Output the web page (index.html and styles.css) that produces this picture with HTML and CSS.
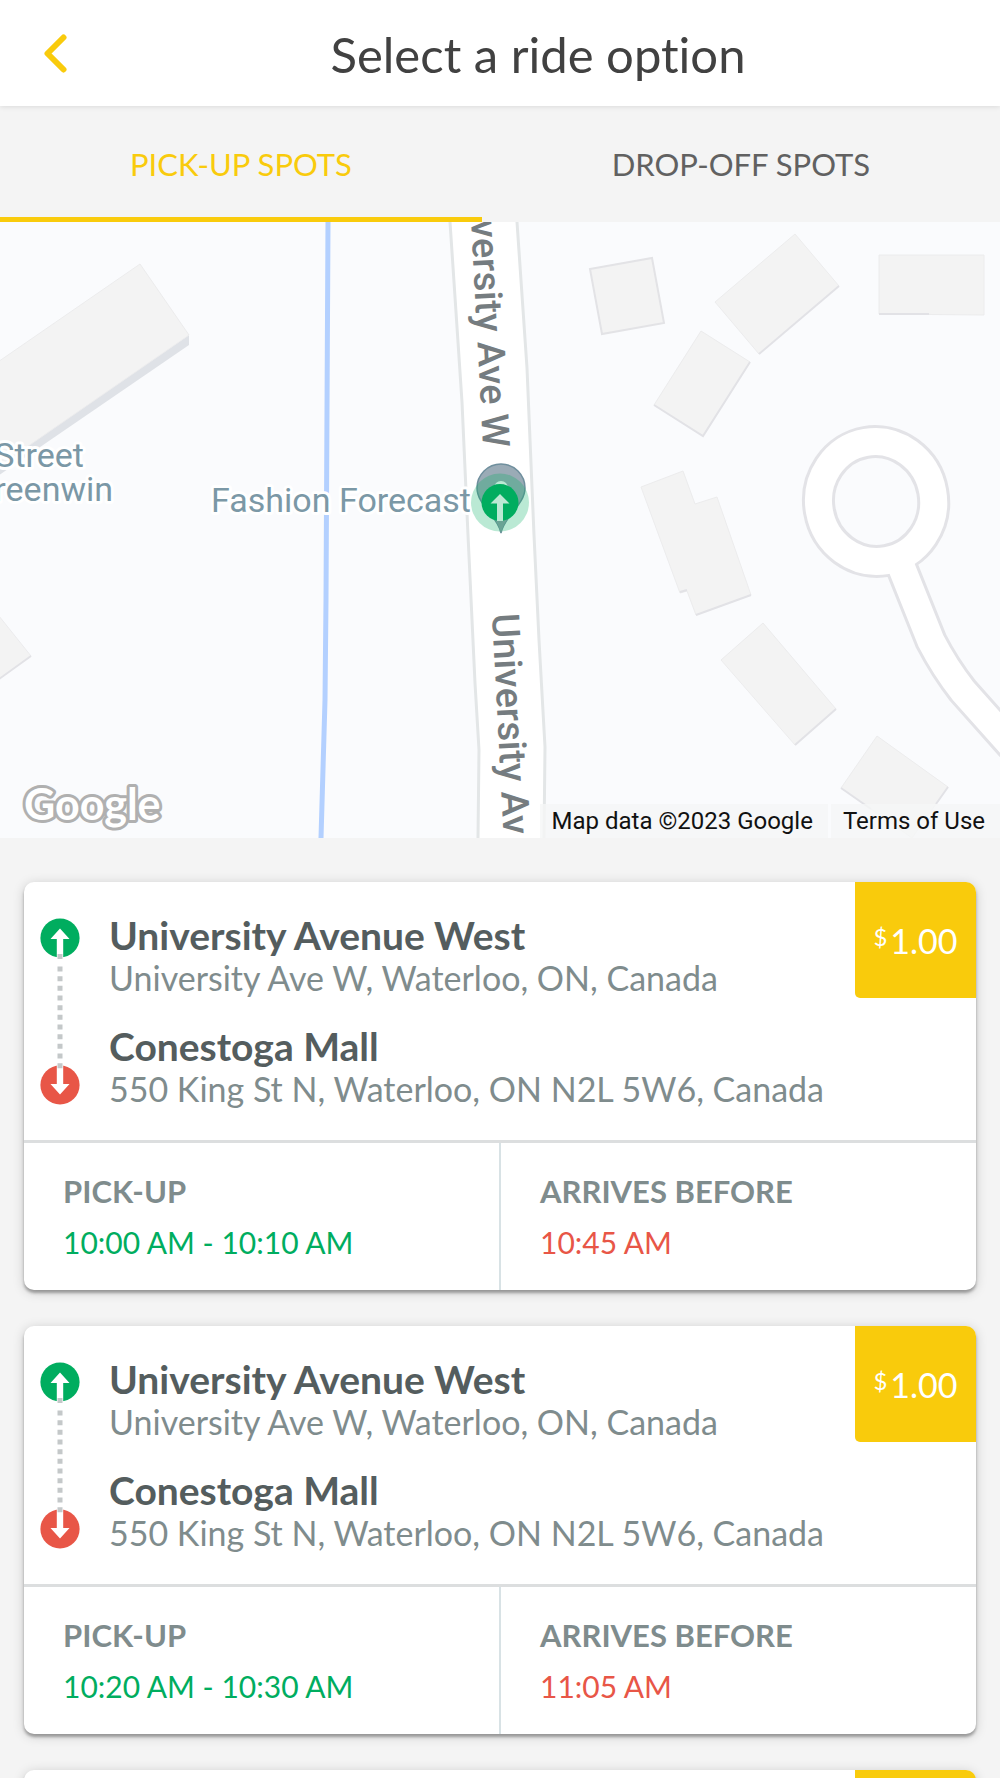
FILE: index.html
```
<!DOCTYPE html>
<html lang="en">
<head>
    <meta charset="UTF-8">
    <meta name="viewport" content="width=device-width, initial-scale=1.0">
    <title>Select a ride option</title>
    <link rel="stylesheet" href="styles.css">
</head>
<body>
    <!-- Shared icons -->
    <svg class="sprite" aria-hidden="true">
        <symbol id="route" viewBox="0 0 40 188">
            <circle cx="20" cy="20" r="19.6" fill="#00ad5f"/>
            <path d="M20 10.500l9.500 10.500h-6.300v20h-6.400v-20h-6.300z" fill="#fff"/>
            <circle cx="20" cy="167" r="19.6" fill="#e85647"/>
            <path d="M20 176.500l9.500-10.500h-6.300v-20h-6.400v20h-6.300z" fill="#fff"/>
            <path d="M20 36v5" stroke="#c4c8c9" stroke-width="5"/>
            <path d="M20 48.500v104" stroke="#c4c8c9" stroke-width="5" stroke-dasharray="5 4.670"/>
        </symbol>
    </svg>

    <div class="app">
        <header class="header">
            <button class="back" type="button" aria-label="Back">
                <svg viewBox="0 0 24 40" width="24" height="40"><path d="M19.500 4.500L3.500 20.500l16 16" fill="none" stroke="#f9cb0c" stroke-width="6" stroke-linecap="round" stroke-linejoin="round"/></svg>
            </button>
            <h1>Select a ride option</h1>
        </header>

        <div class="tabs" role="tablist">
            <button class="tab active" type="button" role="tab" aria-selected="true">PICK-UP SPOTS</button>
            <button class="tab" type="button" role="tab" aria-selected="false">DROP-OFF SPOTS</button>
        </div>

        <div class="map">
            <svg class="map-canvas" viewBox="0 222 1000 616" preserveAspectRatio="xMidYMid slice">
                <!-- buildings -->
                <path d="M189 335v10L-5 478v-10z" fill="#dfe2e7"/>
                <g fill="#f3f3f3" stroke="#ececed" stroke-width="1">
                    <path d="M-5 364L140 264l49 71L-5 469z"/>
                    <path d="M-5 611L31 656l-36 26z"/>
                    <path d="M795 234l44 52-80 68-44-52z"/>
                    <path d="M879 255h105v60l-105-1z"/>
                    <path d="M701 331l49 31-47 74-49-31z"/>
                    <path d="M641 487l42-16 12 33 22-7 34 98-55 20-9-24-7 2z"/>
                    <path d="M763 623l73 86-41 36-74-85z"/>
                    <path d="M877 736l71 51-36 51-71-50z"/>
                </g>
                <path d="M590 269l62-11 12 65-62 11z" fill="#f3f3f3" stroke="#e3e3e6" stroke-width="2"/>
                <g fill="none" stroke="#e2e2e6" stroke-width="2">
                    <path d="M839 286l-80 68M750 362l-47 74-49-31M879 314h50M751 595l-55 20M680 592l7-2M836 709l-41 36M31 656l-36 26M948 787l-12 17M841 788l30 21"/>
                </g>

                <!-- creek -->
                <path d="M328 222L326 600 325 700 321 838" fill="none" stroke="#b3d0ff" stroke-width="5"/>

                <!-- streets -->
                <path d="M450 222L462 402 468 535 475 683 479 750 478 838H544L545 747 539 640 534 535 527 368 517 222z" fill="#fff"/>
                <path d="M450 222L462 402 468 535 475 683 479 750 478 838M544 838L545 747 539 640 534 535 527 368 517 222" fill="none" stroke="#e3e6e7" stroke-width="3"/>
                <g fill="none" stroke="#e3e3e7" stroke-width="33">
                    <ellipse cx="876" cy="501.500" rx="57.500" ry="60" transform="rotate(-10 876 501)"/>
                    <path d="M899 561L931 641Q945 668 963 691L1012 746"/>
                </g>
                <g fill="none" stroke="#fff" stroke-width="27">
                    <ellipse cx="876" cy="501.500" rx="57.500" ry="60" transform="rotate(-10 876 501)"/>
                    <path d="M899 561L931 641Q945 668 963 691L1012 746"/>
                </g>

                <!-- labels -->
                <text class="street" transform="translate(483 448) rotate(87)" text-anchor="end">University Ave W</text>
                <text class="street" transform="translate(492 614) rotate(87)">University Av</text>
                <text class="place" x="84" y="467" text-anchor="end">Street</text>
                <text class="place" x="113" y="501" text-anchor="end">Greenwin</text>
                <text class="place" x="471" y="512" text-anchor="end">Fashion Forecast</text>
                <text class="brand" x="24" y="820">Google</text>

                <!-- pick-up marker -->
                <path d="M501 533C498 516 477 505 477 488a24 24 0 0 1 48 0c0 17-21 28-24 45z" fill="#9aabb6" stroke="#6f8f9d" stroke-width="1.500"/>
                <circle cx="501" cy="488" r="7" fill="#fff"/>
                <circle cx="500" cy="502.500" r="29" fill="#00ad5f" fill-opacity=".27"/>
                <path d="M493 517h16q-6 8-8 16-2-8-8-16z" fill="#6ba395"/>
                <circle cx="500" cy="502.500" r="18.500" fill="#00ad5f"/>
                <path d="M500 494l9.500 9.500H503V521h-6v-17.500h-6.500z" fill="#bbe9d3"/>
            </svg>
            <div class="map-credits">
                <span>Map data ©2023 Google</span>
                <a href="#terms">Terms of Use</a>
            </div>
        </div>

        <main class="rides">
            <article class="ride">
                <div class="ride-top">
                    <svg class="route"><use href="#route"/></svg>
                    <div class="places">
                        <h2>University Avenue West</h2>
                        <p>University Ave W, Waterloo, ON, Canada</p>
                        <h2>Conestoga Mall</h2>
                        <p>550 King St N, Waterloo, ON N2L 5W6, Canada</p>
                    </div>
                    <div class="price"><span class="currency">$</span>1.00</div>
                </div>
                <dl class="times">
                    <div class="time pickup">
                        <dt>PICK-UP</dt>
                        <dd>10:00 AM - 10:10 AM</dd>
                    </div>
                    <div class="time arrival">
                        <dt>ARRIVES BEFORE</dt>
                        <dd>10:45 AM</dd>
                    </div>
                </dl>
            </article>

            <article class="ride">
                <div class="ride-top">
                    <svg class="route"><use href="#route"/></svg>
                    <div class="places">
                        <h2>University Avenue West</h2>
                        <p>University Ave W, Waterloo, ON, Canada</p>
                        <h2>Conestoga Mall</h2>
                        <p>550 King St N, Waterloo, ON N2L 5W6, Canada</p>
                    </div>
                    <div class="price"><span class="currency">$</span>1.00</div>
                </div>
                <dl class="times">
                    <div class="time pickup">
                        <dt>PICK-UP</dt>
                        <dd>10:20 AM - 10:30 AM</dd>
                    </div>
                    <div class="time arrival">
                        <dt>ARRIVES BEFORE</dt>
                        <dd>11:05 AM</dd>
                    </div>
                </dl>
            </article>

            <article class="ride">
                <div class="ride-top">
                    <div class="places"></div>
                    <div class="price"></div>
                </div>
            </article>
        </main>
    </div>
</body>
</html>
```
FILE: styles.css
```
* {
    margin: 0;
    padding: 0;
    box-sizing: border-box;
}

body {
    font-family: Lato, sans-serif;
    font-variant-ligatures: none;
    background: #f4f4f4;
    color: #414141;
}

button {
    font: inherit;
    background: none;
    border: none;
    cursor: pointer;
}

.sprite {
    display: none;
}

.app {
    display: flex;
    flex-direction: column;
    height: 100vh;
    overflow: hidden;
}

/* Header */
.header {
    display: flex;
    align-items: center;
    flex-shrink: 0;
    height: 106px;
    background: #fff;
    box-shadow: 0 1px 5px rgba(0, 0, 0, 0.1);
}

.back {
    display: flex;
    width: 76px;
    padding-left: 44px;
}

.header h1 {
    flex: 1;
    padding-top: 2px;
    font-size: 49px;
    font-weight: 400;
    line-height: 64px;
    text-align: center;
}

/* Tabs */
.tabs {
    display: flex;
    flex-shrink: 0;
    height: 116px;
}

.tab {
    flex: 1 1 auto;
    font-size: 31px;
    color: #616161;
    border-top: 5px solid transparent;
    border-bottom: 5px solid transparent;
}

.tab.active {
    color: #f9cb0c;
    border-bottom-color: #f9cb0c;
}

/* Map */
.map {
    position: relative;
    flex-shrink: 0;
    aspect-ratio: 1000 / 616;
    background: #fafbfd;
    overflow: hidden;
}

.map-canvas {
    display: block;
    width: 100%;
    height: 100%;
}

.map text {
    font-family: Roboto, sans-serif;
    paint-order: stroke;
    stroke-linejoin: round;
}

.map .street {
    font-size: 38px;
    font-weight: 500;
    fill: #757c80;
}

.map .place {
    font-size: 34px;
    fill: #7b98a6;
    stroke: #fff;
    stroke-width: 6px;
}

.map .brand {
    font-family: Lato, sans-serif;
    font-size: 43px;
    font-weight: 700;
    fill: #fff;
    stroke: #b0b0b0;
    stroke-width: 6px;
}

.map-credits {
    position: absolute;
    right: 0;
    bottom: 0;
    display: flex;
    gap: 3px;
    font-family: Roboto, sans-serif;
    font-size: 24px;
    line-height: 34px;
    color: #111;
}

.map-credits > * {
    padding: 0 15px 0 12px;
    color: inherit;
    text-decoration: none;
    background: rgba(245, 246, 246, 0.8);
}

/* Ride cards */
.rides {
    display: flex;
    flex-direction: column;
    gap: 36px;
    flex: 1;
    min-height: 0;
    padding: 44px 24px 0;
    overflow: hidden;
}

.ride {
    flex-shrink: 0;
    background: #fff;
    border-radius: 10px;
    box-shadow: 0 3px 3px rgba(0, 0, 0, 0.3), 0 2px 12px rgba(0, 0, 0, 0.18);
}

.ride-top {
    display: flex;
    align-items: flex-start;
    min-height: 258px;
}

.route {
    flex-shrink: 0;
    width: 40px;
    height: 188px;
    margin: 36px 25px 0 16px;
}

.places {
    flex: 1;
    padding: 31px 0 29px 4px;
}

.places h2 {
    font-size: 39px;
    font-weight: 700;
    line-height: 45px;
    color: #545d5e;
}

.places p {
    font-size: 34px;
    line-height: 40px;
    color: #7f8c8d;
    margin-bottom: 26px;
}

.places p:last-child {
    margin-bottom: 0;
}

.price {
    display: flex;
    align-items: center;
    justify-content: center;
    gap: 3px;
    width: 121px;
    height: 116px;
    font-size: 34px;
    color: #fff;
    background: #f9cb0c;
    border-radius: 0 10px 0 5px;
}

.currency {
    font-size: 24px;
    padding-bottom: 8px;
}

.times {
    display: flex;
    border-top: 3px solid #dcdedf;
}

.time {
    flex: 1;
    padding: 28px 39px 22px;
}

.time + .time {
    border-left: 2px solid #d8e2e5;
}

.time dt {
    margin-bottom: 6px;
    font-size: 31px;
    font-weight: 700;
    line-height: 40px;
    color: #7f8c8d;
}

.time dd {
    font-size: 30px;
    line-height: 51px;
}

.pickup dd {
    color: #00ad5f;
}

.arrival dd {
    color: #e85647;
}
```
